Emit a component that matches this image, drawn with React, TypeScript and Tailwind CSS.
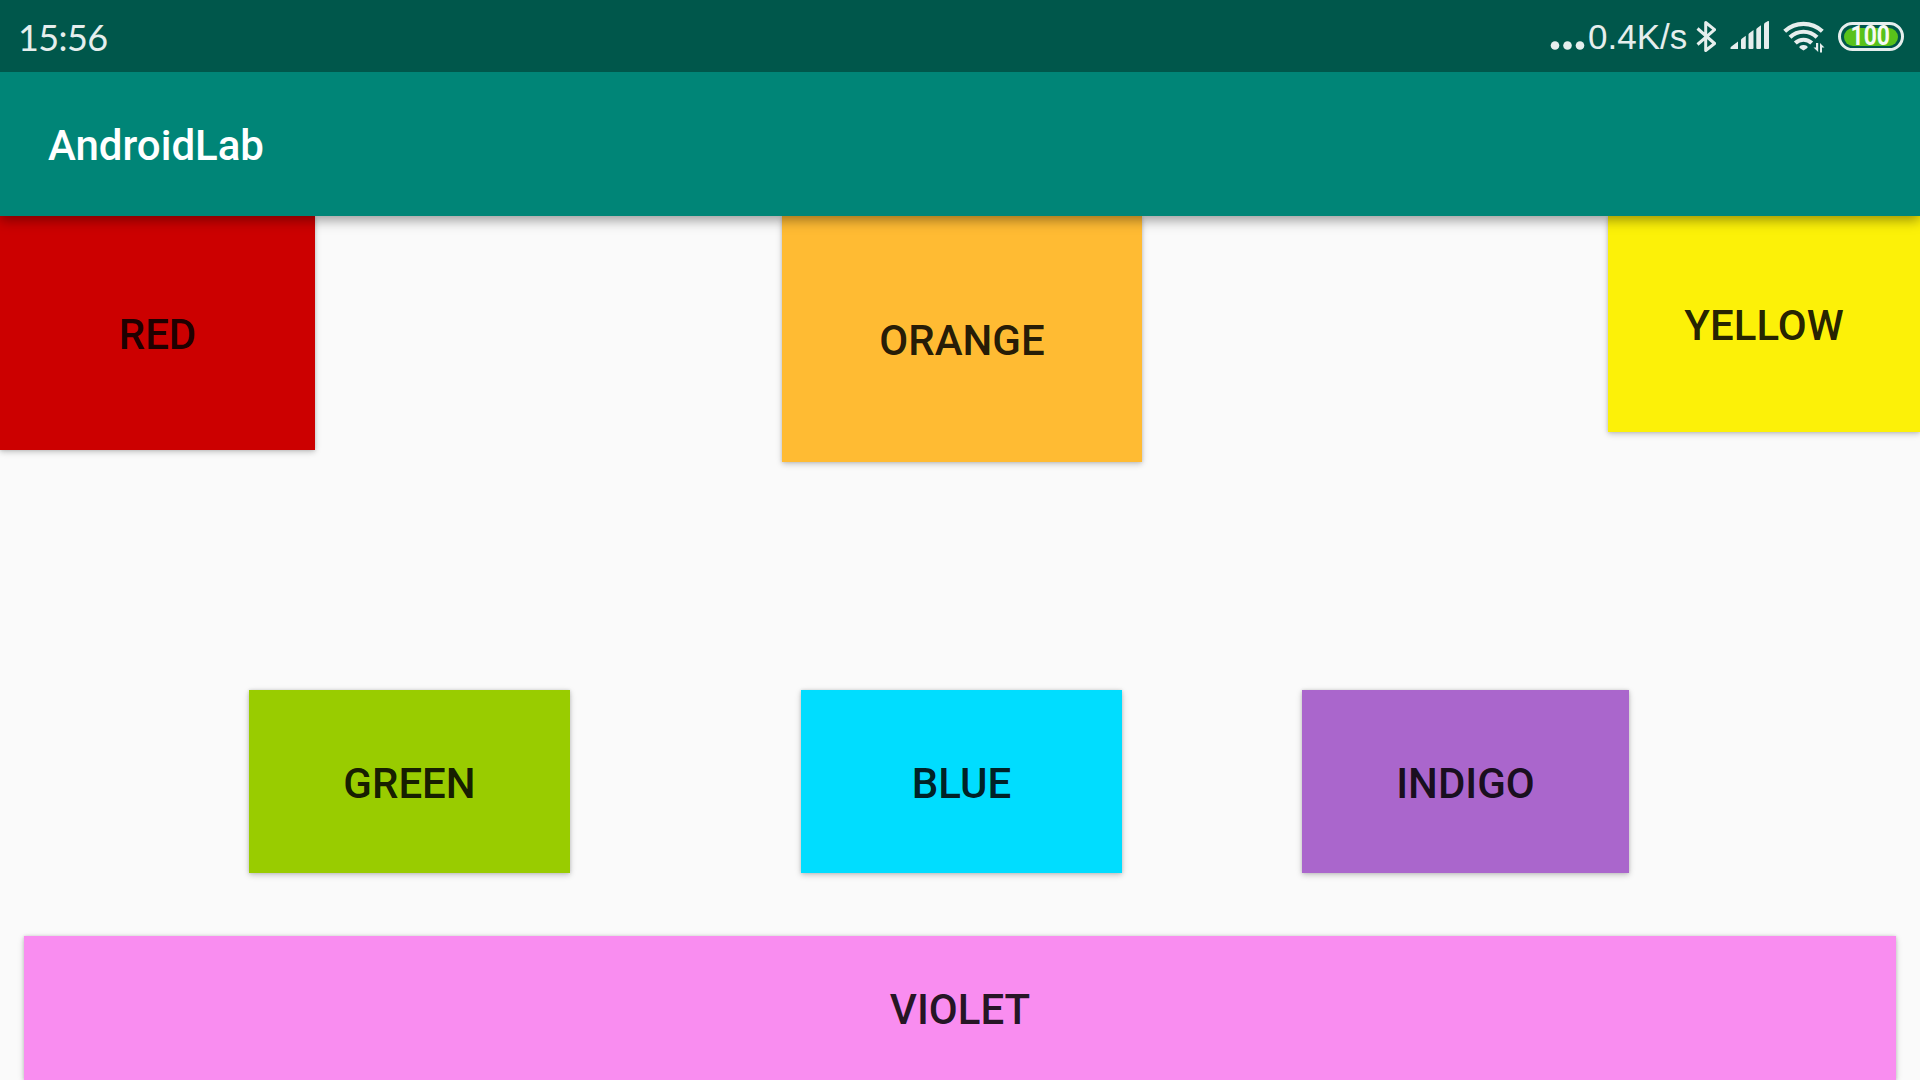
import React from "react";

function ColorButton({ label, className }: { label: string; className: string }) {
  return (
    <button
      type="button"
      className={`flex shrink-0 items-center justify-center text-[42px] leading-none font-medium text-black/87 shadow-[0_2px_6px_rgba(0,0,0,0.22),0_0_3px_rgba(0,0,0,0.12)] ${className}`}
    >
      <span className="pt-[4px]">{label}</span>
    </button>
  );
}

function StatusIcons() {
  return (
    <div className="flex items-start text-[#e6eeed]">
      <svg className="mt-[41px] h-[9px] w-[36px]" viewBox="0 0 36 9" fill="currentColor">
        <circle cx="5" cy="4.5" r="4.3" />
        <circle cx="17.5" cy="4.5" r="4.3" />
        <circle cx="30" cy="4.5" r="4.3" />
      </svg>
      <span className="mt-[19px] ml-[2px] w-[108px] font-['Liberation_Sans',Arial,sans-serif] text-[35px] leading-[36px] whitespace-nowrap">
        0.4K/s
      </span>
      <svg className="mt-[20px] h-[33px] w-[20px]" viewBox="0 0 20 33" fill="none" stroke="currentColor" strokeWidth="3">
        <path d="M1.500 8.500 18.600 23.500 9.700 30.500V2.500L18.600 9.700 1.500 24.500" strokeLinejoin="round" />
      </svg>
      <svg className="mt-[21px] ml-[14px] h-[29px] w-[40px]" viewBox="0 0 40 29" fill="currentColor">
        <path d="M0.500 28Q0 26 2 25L8 20.500V28H1Z" />
        <path d="M11 19q0-1 1-1.600l3.800-2.600V27q0 1-1 1h-2.800q-1 0-1-1Z" />
        <path d="M18.500 13.500q0-1 1-1.600l4-2.800V27q0 1-1 1h-3q-1 0-1-1Z" />
        <path d="M26.300 8.500q0-1 1-1.600l3.700-2.600V27q0 1-1 1h-2.700q-1 0-1-1Z" />
        <path d="M34 3.500q0-1 1-1.700l3-1.700q1-.5 1 1V27q0 1-1 1h-3q-1 0-1-1Z" />
      </svg>
      <svg className="mt-[21px] ml-[13px] h-[33px] w-[42px]" viewBox="0 0 42 33">
        <g fill="none" stroke="currentColor" strokeWidth="4.200">
          <path d="M1.700 10.300A27.500 27.500 0 0 1 39.300 10.300" />
          <path d="M7 16.200A19.500 19.500 0 0 1 34 16.200" />
          <path d="M12.300 22A12 12 0 0 1 28.700 22" />
        </g>
        <path d="M16.300 26.500Q16.300 24 20.500 24T24.700 26.500Q24 27.500 20.500 29.500Q17 27.500 16.300 26.500Z" fill="currentColor" />
        <path d="M35.200 22V31L30.500 26.500H33V22ZM37 31.500V22L41.500 26.500H39V31.500Z" fill="currentColor" />
      </svg>
      <div className="mt-[22px] ml-[13px] flex h-[29px] w-[66px] items-center justify-center rounded-full border-[3px] border-[#e6eeed] p-[3px]">
        <div className="flex h-[18px] w-[54px] shrink-0 items-center justify-center rounded-full bg-[#59c21a] text-[27px] leading-none font-bold text-[#f6faf4]">
          <span className="-translate-x-px scale-x-[0.85]">100</span>
        </div>
      </div>
    </div>
  );
}

export default function App() {
  return (
    <div className="flex h-[1080px] w-[1920px] flex-col overflow-hidden bg-[#fafafa] font-[Roboto,sans-serif]">
      <div className="flex h-[72px] shrink-0 justify-between bg-[#00574b] pr-[16px] pl-[18px]">
        <span className="mt-[16px] font-[Lato,sans-serif] text-[36px] leading-[43px] tracking-[-0.6px] text-[#e6eeed]">
          15:56
        </span>
        <StatusIcons />
      </div>
      <header className="relative z-10 flex h-[144px] shrink-0 items-center bg-[#008577] pl-[48px] shadow-[0_4px_12px_rgba(0,0,0,0.4)] [clip-path:inset(0_0_-30px_0)]">
        <h1 className="pt-[4px] text-[42px] leading-none font-medium text-white">AndroidLab</h1>
      </header>
      <main className="flex min-h-0 flex-1 flex-col">
        <div className="flex h-[474px] shrink-0 items-start">
          <ColorButton label="RED" className="h-[234px] w-[315px] bg-[#cc0000]" />
          <ColorButton label="ORANGE" className="ml-[467px] h-[246px] w-[360px] bg-[#ffbb33]" />
          <ColorButton label="YELLOW" className="ml-[466px] h-[216px] w-[312px] bg-[#fcf108]" />
        </div>
        <div className="flex h-[246px] shrink-0 items-start pl-[249px]">
          <ColorButton label="GREEN" className="h-[183px] w-[321px] bg-[#99cc00]" />
          <ColorButton label="BLUE" className="ml-[231px] h-[183px] w-[321px] bg-[#00ddff]" />
          <ColorButton label="INDIGO" className="ml-[180px] h-[183px] w-[327px] bg-[#aa66cc]" />
        </div>
        <div className="flex px-[24px]">
          <ColorButton label="VIOLET" className="h-[144px] w-full bg-[#f98df0]" />
        </div>
      </main>
    </div>
  );
}
